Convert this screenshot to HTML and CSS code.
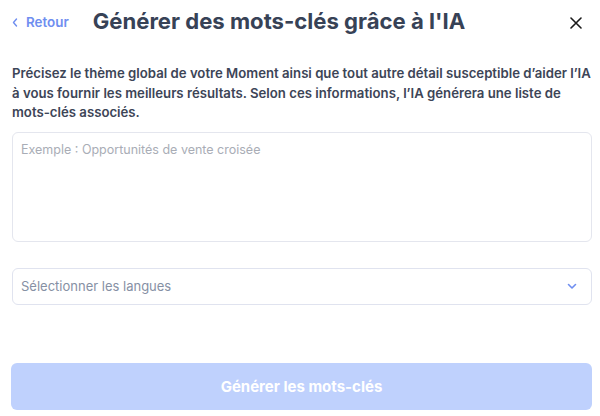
FILE: index.html
```html
<!DOCTYPE html>
<html lang="fr">
<head>
<meta charset="utf-8">
<link rel="stylesheet" href="styles.css">
</head>
<body>
<div class="modal">
  <header class="header">
    <a class="back">
      <svg width="6" height="9" viewBox="0 0 6 9"><path d="M4.5 1 L1.5 4.5 L4.5 8" fill="none" stroke="#6f8ef0" stroke-width="1.4" stroke-linecap="round" stroke-linejoin="round"/></svg>
      <span>Retour</span>
    </a>
    <h1 class="title">Générer des mots-clés grâce à l'IA</h1>
    <button class="close" aria-label="Fermer">
      <svg width="12" height="12" viewBox="0 0 12 12"><path d="M1 1 L11 11 M11 1 L1 11" stroke="#1a1a1a" stroke-width="1.6" stroke-linecap="round"/></svg>
    </button>
  </header>
  <p class="desc">Précisez le thème global de votre Moment ainsi que tout autre détail susceptible d’aider l’IA à vous fournir les meilleurs résultats. Selon ces informations, l’IA générera une liste de mots-clés associés.</p>
  <textarea class="area" placeholder="Exemple : Opportunités de vente croisée"></textarea>
  <div class="select">
    <span>Sélectionner les langues</span>
    <svg width="10" height="7" viewBox="0 0 10 7"><path d="M1.5 1.5 L5 5 L8.5 1.5" fill="none" stroke="#6f8ef0" stroke-width="1.6" stroke-linecap="round" stroke-linejoin="round"/></svg>
  </div>
  <button class="submit">Générer les mots-clés</button>
</div>
</body>
</html>
```
FILE: styles.css
```css
* { box-sizing: border-box; }
html, body { margin: 0; padding: 0; background: #fff; }
body { font-family: Inter, "Noto Sans", sans-serif; color: #3a4458; }
.modal { width: 600px; height: 416px; padding: 0 8px 0 12px; display: flex; flex-direction: column; }
.header { display: flex; align-items: center; height: 46px; }
.back { display: flex; align-items: center; gap: 8px; color: #6f8ef0; font-size: 13.4px; font-weight: 600; cursor: pointer; margin-top: -2px; }
.title { margin: -4px 0 0 24px; font-size: 22.1px; font-weight: 700; color: #374256; flex: 1; }
.close { border: 0; background: none; padding: 0; width: 12px; height: 12px; display: flex; margin-right: 10px; }
.desc { margin: 18px 0 0; font-size: 13.2px; font-weight: 600; line-height: 19.5px; color: #3d4557; }
.area { margin-top: 9px; width: 580px; height: 110px; border: 1px solid #e4e6ee; border-radius: 6px; padding: 9px 8px; font-family: inherit; font-size: 12.5px; resize: none; outline: none; }
.area::placeholder { color: #a9adb6; }
.select { margin-top: 26px; width: 580px; height: 37px; border: 1px solid #e0e3ef; border-radius: 6px; display: flex; align-items: center; justify-content: space-between; padding: 0 14px 0 8px; font-size: 13px; color: #8690a4; }
.submit { margin-top: 58px; width: 581px; height: 47px; margin-left: -1px; border: 0; border-radius: 6px; background: #bfd1fd; color: #fff; font-family: inherit; font-size: 15px; font-weight: 700; }
```
